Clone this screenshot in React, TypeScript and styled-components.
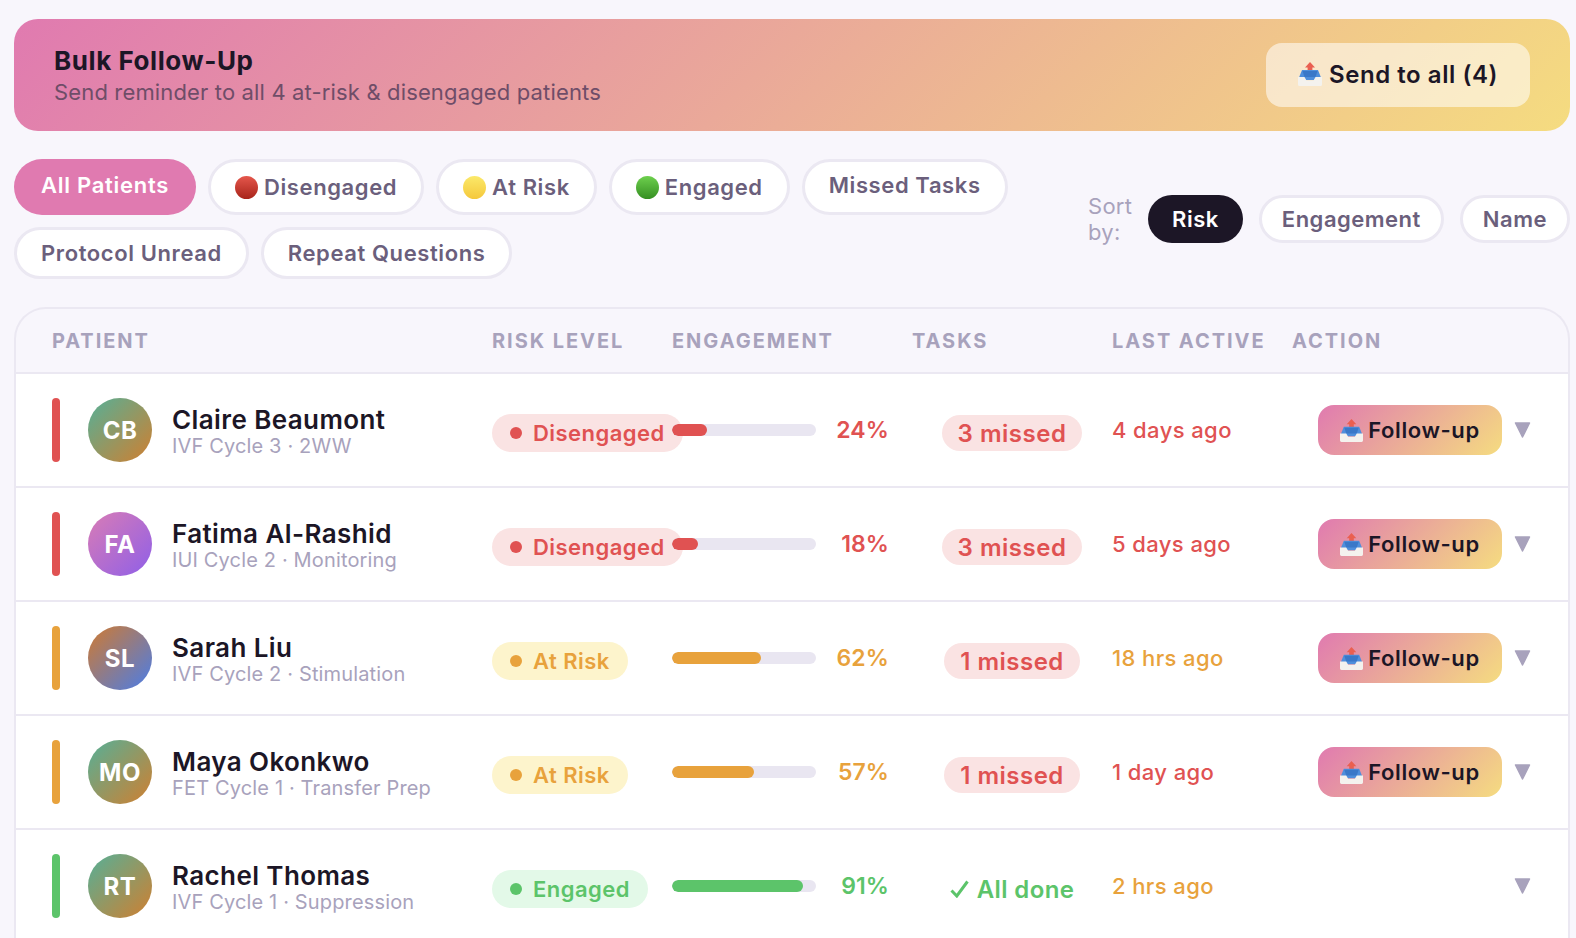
import React, { useId } from "react";
import styled, { createGlobalStyle } from "styled-components";

const Global = createGlobalStyle`
  html, body { margin: 0; padding: 0; background: #f8f6fc; }
  body { font-family: Inter, "Liberation Sans", sans-serif; height: 938px; overflow: hidden; }
  * { box-sizing: border-box; }
`;

const RED = "#e05252";
const ORANGE = "#e8a23c";
const GREEN = "#5cc46a";

const Page = styled.div`
  padding: 19px 6px 0 14px;
  display: flex;
  flex-direction: column;
`;

const Banner = styled.section`
  height: 112px;
  border-radius: 24px;
  padding: 0 40px;
  display: flex;
  align-items: center;
  justify-content: space-between;
  background: linear-gradient(135deg, #e07ab0 0%, #f5dc80 100%);
`;
const BannerTitle = styled.div`
  font-size: 26px;
  font-weight: 700;
  letter-spacing: 0.57px;
  line-height: 32px;
  color: #1c1626;
`;
const BannerSub = styled.div`
  font-size: 22px;
  letter-spacing: 0.15px;
  line-height: 28px;
  margin-top: 1px;
  color: #6f4d68;
`;
const BannerButton = styled.button`
  width: 264px;
  height: 64px;
  border: 0;
  border-radius: 16px;
  background: rgba(255, 255, 255, 0.55);
  color: #1c1626;
  font: 600 24px Inter, sans-serif;
  letter-spacing: 0.55px;
  display: flex;
  align-items: center;
  justify-content: center;
  gap: 7px;
  padding: 0 0 2px;
`;

const Controls = styled.div`
  display: flex;
  justify-content: space-between;
  margin-top: 28px;
  height: 148px;
`;
const Filters = styled.div`
  width: 1000px;
  display: flex;
  flex-wrap: wrap;
  align-content: flex-start;
  gap: 12px;
`;
const Chip = styled.button<{ $active?: boolean; $tall?: boolean; $raised?: boolean }>`
  height: ${(p) => (p.$tall ? 56 : 52)}px;
  border-radius: 28px;
  border: ${(p) => (p.$active ? "0" : "3px solid #ebe8f2")};
  background: ${(p) => (p.$active ? "#e07ab0" : "#fff")};
  color: ${(p) => (p.$active ? "#fff" : "#6b5f7c")};
  font: 600 22px Inter, sans-serif;
  letter-spacing: ${(p) => (p.$active ? 0.72 : 0.6)}px;
  padding: 0 ${(p) => (p.$active ? 27 : 24)}px ${(p) => (p.$raised ? 4 : 0)}px;
  display: flex;
  align-items: center;
  gap: 6px;
`;
const SortBar = styled.div`
  display: flex;
  align-items: flex-start;
  gap: 16px;
  margin-top: 36px;
`;
const SortLabel = styled.div`
  width: 44px;
  font-size: 22px;
  letter-spacing: 0.2px;
  line-height: 26px;
  margin-top: -2px;
  color: #a8a2bc;
`;
const SortChip = styled.button<{ $active?: boolean }>`
  height: 48px;
  border-radius: 24px;
  border: ${(p) => (p.$active ? "0" : "3px solid #ebe8f2")};
  background: ${(p) => (p.$active ? "#1c1626" : "#fff")};
  color: ${(p) => (p.$active ? "#fff" : "#6b5f7c")};
  font: 600 22px Inter, sans-serif;
  letter-spacing: 0.5px;
  padding: 0 ${(p) => (p.$active ? 24 : 20)}px;
`;

const Table = styled.div`
  border: 2px solid #ebe8f2;
  border-bottom: 0;
  border-radius: 32px 32px 0 0;
  overflow: hidden;
`;
const columns = "grid-template-columns: 440px 180px 240px 200px 180px 1fr;";
const HeadRow = styled.div`
  display: grid;
  ${columns}
  align-items: center;
  height: 65px;
  padding: 0 37px 0 36px;
  border-bottom: 2px solid #ebe8f2;
`;
const HeadCell = styled.div`
  font-size: 20px;
  font-weight: 700;
  letter-spacing: 1.95px;
  color: #a8a2bc;
  white-space: nowrap;
`;
const Row = styled.div`
  display: grid;
  ${columns}
  align-items: center;
  height: 114px;
  padding: 24px 37px 24px 36px;
  background: #fff;
  border-bottom: 2px solid #ebe8f2;
`;
const PatientCell = styled.div`
  display: flex;
  align-items: center;
`;
const Tick = styled.div<{ $color: string }>`
  width: 8px;
  height: 64px;
  border-radius: 4px;
  background: ${(p) => p.$color};
  margin-right: 28px;
`;
const Avatar = styled.div<{ $gradient: string }>`
  width: 64px;
  height: 64px;
  border-radius: 50%;
  background: linear-gradient(135deg, ${(p) => p.$gradient});
  color: #fff;
  font-size: 24px;
  font-weight: 700;
  letter-spacing: 0.5px;
  display: flex;
  align-items: center;
  justify-content: center;
  margin-right: 20px;
`;
const PatientText = styled.div`
  margin-top: 3px;
`;
const Name = styled.div`
  font-size: 26px;
  font-weight: 600;
  letter-spacing: 0.4px;
  line-height: 29px;
  color: #1c1626;
`;
const Sub = styled.div`
  font-size: 20px;
  letter-spacing: 0.15px;
  line-height: 24px;
  color: #a8a2bc;
`;
const RiskBadge = styled.div<{ $color: string; $bg: string }>`
  justify-self: start;
  height: 38px;
  border-radius: 19px;
  margin-top: 6px;
  padding: 0 18px;
  background: ${(p) => p.$bg};
  color: ${(p) => p.$color};
  font-size: 22px;
  font-weight: 600;
  letter-spacing: 0.45px;
  display: inline-flex;
  align-items: center;
  gap: 11px;
  white-space: nowrap;
`;
const Dot = styled.span`
  width: 12px;
  height: 12px;
  border-radius: 50%;
  background: currentColor;
`;
const EngageCell = styled.div`
  display: flex;
  align-items: center;
  justify-content: space-between;
  width: 217px;
  position: relative;
`;
const Track = styled.div`
  width: 144px;
  height: 12px;
  border-radius: 6px;
  background: #e9e6f1;
  overflow: hidden;
`;
const Fill = styled.div<{ $color: string }>`
  height: 100%;
  border-radius: 6px;
  background: ${(p) => p.$color};
`;
const Pct = styled.div<{ $color: string }>`
  font-size: 23px;
  font-weight: 600;
  letter-spacing: 0.1px;
  color: ${(p) => p.$color};
`;
const TaskCell = styled.div`
  justify-self: center;
  margin-top: 6px;
`;
const Missed = styled.div`
  height: 36px;
  border-radius: 18px;
  padding: 0 16px;
  background: #fae3e3;
  color: ${RED};
  font-size: 24px;
  font-weight: 600;
  letter-spacing: 0.5px;
  display: flex;
  align-items: center;
`;
const Done = styled.div`
  color: ${GREEN};
  font-size: 24px;
  font-weight: 600;
  letter-spacing: 0.4px;
  display: flex;
  align-items: center;
  gap: 8px;
`;
const Active = styled.div<{ $color: string }>`
  font-size: 22px;
  font-weight: 500;
  letter-spacing: 0.4px;
  color: ${(p) => p.$color};
`;
const ActionCell = styled.div`
  display: flex;
  align-items: center;
  justify-content: flex-end;
  gap: 12px;
`;
const FollowButton = styled.button`
  width: 184px;
  height: 50px;
  border: 0;
  border-radius: 16px;
  background: linear-gradient(135deg, #e07ab0 0%, #f5dc80 100%);
  color: #1c1626;
  font: 600 22px Inter, sans-serif;
  letter-spacing: 0.6px;
  display: flex;
  align-items: center;
  justify-content: center;
  gap: 5px;
  padding: 0;
`;

const Ball = ({ c }: { c: [string, string] }) => {
  const id = useId();
  return (
    <svg width="23" height="23" viewBox="0 0 23 23">
      <defs>
        <linearGradient id={id} x1="0" y1="0" x2="0" y2="1">
          <stop offset="0" stopColor={c[0]} />
          <stop offset="1" stopColor={c[1]} />
        </linearGradient>
      </defs>
      <circle cx="11.5" cy="11.5" r="11.5" fill={`url(#${id})`} />
    </svg>
  );
};

const Tray = ({ size }: { size: number }) => (
  <svg width={size} height={size} viewBox="0 0 24 24">
    <path d="M12 0 L17 5.5 H14.4 V10 H9.6 V5.5 H7 Z" fill="#ea5f50" />
    <path d="M4 8 H20 L24 18 H0 Z" fill="#4f8fdc" />
    <path d="M4.5 9 H19.5 L17.5 15 H6.5 Z" fill="#3a78c8" />
    <path d="M0 15 H6.5 L8.5 18.5 H15.5 L17.5 15 H24 V22.5 Q24 24 22.5 24 H1.5 Q0 24 0 22.5 Z" fill="#f4f2ee" />
  </svg>
);

const Check = () => (
  <svg width="19" height="18" viewBox="0 0 19 18">
    <path d="M1.5 10.5 L6.8 16 L17.5 1.5" fill="none" stroke={GREEN} strokeWidth="3" />
  </svg>
);

const Caret = () => (
  <svg width="17" height="16" viewBox="0 0 17 16">
    <path d="M1.5 1 H15.5 L8.5 15 Z" fill="#a8a2bc" stroke="#a8a2bc" strokeWidth="1.5" strokeLinejoin="round" />
  </svg>
);

const CB = "#55b098 0%, #d07f30 100%";
const FA = "#d97cb5 0%, #8f5fe8 100%";
const SL = "#d07a30 0%, #4a7de8 100%";

type P = {
  initials: string; name: string; sub: string; grad: string; tier: "red" | "orange" | "green";
  pct: number; missed?: number; active: string; activeColor: string; follow: boolean;
};
const tiers = {
  red: { color: RED, bg: "#fae3e3", label: "Disengaged" },
  orange: { color: ORANGE, bg: "#fdf4cc", label: "At Risk" },
  green: { color: GREEN, bg: "#e3f9e8", label: "Engaged" },
};
const patients: P[] = [
  { initials: "CB", name: "Claire Beaumont", sub: "IVF Cycle 3 · 2WW", grad: CB, tier: "red", pct: 24, missed: 3, active: "4 days ago", activeColor: RED, follow: true },
  { initials: "FA", name: "Fatima Al-Rashid", sub: "IUI Cycle 2 · Monitoring", grad: FA, tier: "red", pct: 18, missed: 3, active: "5 days ago", activeColor: RED, follow: true },
  { initials: "SL", name: "Sarah Liu", sub: "IVF Cycle 2 · Stimulation", grad: SL, tier: "orange", pct: 62, missed: 1, active: "18 hrs ago", activeColor: ORANGE, follow: true },
  { initials: "MO", name: "Maya Okonkwo", sub: "FET Cycle 1 · Transfer Prep", grad: CB, tier: "orange", pct: 57, missed: 1, active: "1 day ago", activeColor: RED, follow: true },
  { initials: "RT", name: "Rachel Thomas", sub: "IVF Cycle 1 · Suppression", grad: CB, tier: "green", pct: 91, active: "2 hrs ago", activeColor: ORANGE, follow: false },
];

export default function App() {
  return (
    <Page>
      <Global />
      <Banner>
        <div>
          <BannerTitle>Bulk Follow-Up</BannerTitle>
          <BannerSub>Send reminder to all 4 at-risk &amp; disengaged patients</BannerSub>
        </div>
        <BannerButton><Tray size={24} />Send to all (4)</BannerButton>
      </Banner>
      <Controls>
        <Filters>
          <Chip $active $tall $raised>All Patients</Chip>
          <Chip $tall><Ball c={["#e5574c", "#a8241a"]} />Disengaged</Chip>
          <Chip $tall><Ball c={["#fbe96a", "#f5c83c"]} />At Risk</Chip>
          <Chip $tall><Ball c={["#6ed04e", "#358f22"]} />Engaged</Chip>
          <Chip $tall $raised>Missed Tasks</Chip>
          <Chip>Protocol Unread</Chip>
          <Chip>Repeat Questions</Chip>
        </Filters>
        <SortBar>
          <SortLabel>Sort by:</SortLabel>
          <SortChip $active>Risk</SortChip>
          <SortChip>Engagement</SortChip>
          <SortChip>Name</SortChip>
        </SortBar>
      </Controls>
      <Table>
        <HeadRow>
          <HeadCell>PATIENT</HeadCell>
          <HeadCell>RISK LEVEL</HeadCell>
          <HeadCell>ENGAGEMENT</HeadCell>
          <HeadCell>TASKS</HeadCell>
          <HeadCell>LAST ACTIVE</HeadCell>
          <HeadCell>ACTION</HeadCell>
        </HeadRow>
        {patients.map((p) => {
          const t = tiers[p.tier];
          return (
            <Row key={p.initials}>
              <PatientCell>
                <Tick $color={t.color} />
                <Avatar $gradient={p.grad}>{p.initials}</Avatar>
                <PatientText>
                  <Name>{p.name}</Name>
                  <Sub>{p.sub}</Sub>
                </PatientText>
              </PatientCell>
              <RiskBadge $color={t.color} $bg={t.bg}><Dot />{t.label}</RiskBadge>
              <EngageCell>
                <Track><Fill $color={t.color} style={{ width: `${p.pct}%` }} /></Track>
                <Pct $color={t.color}>{p.pct}%</Pct>
              </EngageCell>
              <TaskCell>
                {p.missed ? <Missed>{p.missed} missed</Missed> : <Done><Check />All done</Done>}
              </TaskCell>
              <Active $color={p.activeColor}>{p.active}</Active>
              <ActionCell>
                {p.follow && <FollowButton><Tray size={23} />Follow-up</FollowButton>}
                <Caret />
              </ActionCell>
            </Row>
          );
        })}
      </Table>
    </Page>
  );
}
